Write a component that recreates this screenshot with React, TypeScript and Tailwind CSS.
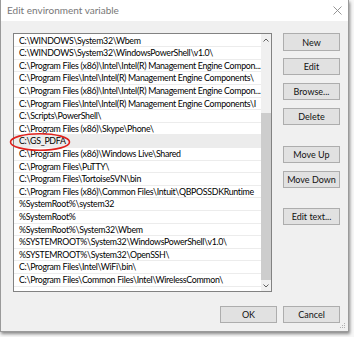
import React from 'react';

const rows = [
  'C:\\WINDOWS\\System32\\Wbem',
  'C:\\WINDOWS\\System32\\WindowsPowerShell\\v1.0\\',
  'C:\\Program Files (x86)\\Intel\\Intel(R) Management Engine Compon...',
  'C:\\Program Files\\Intel\\Intel(R) Management Engine Components\\',
  'C:\\Program Files (x86)\\Intel\\Intel(R) Management Engine Compon...',
  'C:\\Program Files\\Intel\\Intel(R) Management Engine Components\\I',
  'C:\\Scripts\\PowerShell\\',
  'C:\\Program Files (x86)\\Skype\\Phone\\',
  'C:\\GS_PDFA',
  'C:\\Program Files (x86)\\Windows Live\\Shared',
  'C:\\Program Files\\PuTTY\\',
  'C:\\Program Files\\TortoiseSVN\\bin',
  'C:\\Program Files (x86)\\Common Files\\Intuit\\QBPOSSDKRuntime',
  '%SystemRoot%\\system32',
  '%SystemRoot%',
  '%SystemRoot%\\System32\\Wbem',
  '%SYSTEMROOT%\\System32\\WindowsPowerShell\\v1.0\\',
  '%SYSTEMROOT%\\System32\\OpenSSH\\',
  'C:\\Program Files\\Intel\\WiFi\\bin\\',
  'C:\\Program Files\\Common Files\\Intel\\WirelessCommon\\',
];

function Btn({ label, className = '' }: { label: string; className?: string }) {
  return (
    <button
      className={`w-[57px] h-[17px] bg-[#e1e1e1] border border-[#adadad] text-[9px] text-[#111] leading-none flex items-center justify-center whitespace-nowrap ${className}`}
    >
      {label}
    </button>
  );
}

export default function App() {
  return (
    <div
      className="w-[354px] h-[337px] bg-[#f7f7f7] relative overflow-hidden"
      style={{ fontFamily: 'Lato, "Noto Sans", Arial, sans-serif' }}
    >
      <div className="w-[349px] h-[332px] flex flex-col border-l border-r border-b border-[#9a9a9a] shadow-[1px_2px_3px_rgba(0,0,0,0.45)] relative">
        {/* title bar */}
        <div className="h-[21px] bg-white flex items-center justify-between pl-[6px] pr-[5px]">
          <span className="text-[10px] text-[#777]">Edit environment variable</span>
          <svg width="9" height="9" viewBox="0 0 9 9" className="mr-[1px]">
            <path d="M0.5 0.5 L8.5 8.5 M8.5 0.5 L0.5 8.5" stroke="#8a8a8a" strokeWidth="0.9" />
          </svg>
        </div>

        {/* body */}
        <div className="flex-1 bg-[#f0f0f0] flex flex-col pl-[12px] pt-[12px] pr-[8px]">
          <div className="flex gap-[11px]">
            {/* list */}
            <div className="w-[259px] h-[259px] border border-[#828282] bg-white flex">
              <div className="flex-1 min-w-0 flex flex-col overflow-hidden pt-[0.7px]">
                {rows.map((r, i) => (
                  <div
                    key={i}
                    className={`h-[12.6px] shrink-0 pl-[5px] text-[8.8px] tracking-[-0.3px] leading-[12px] text-black whitespace-nowrap overflow-hidden border-b border-[#ececec] ${
                      i === 8 ? 'bg-[#ececec]' : ''
                    }`}
                  >
                    {r}
                  </div>
                ))}
              </div>
              {/* scrollbar */}
              <div className="w-[10px] shrink-0 bg-[#f0f0f0] flex flex-col">
                <div className="h-[12px] flex items-center justify-center">
                  <svg width="6" height="4" viewBox="0 0 6 4">
                    <path d="M0.5 3.5 L3 1 L5.5 3.5" stroke="#606060" strokeWidth="1" fill="none" />
                  </svg>
                </div>
                <div className="h-[67px]" />
                <div className="h-[167px] bg-[#cdcdcd]" />
                <div className="flex-1 flex items-center justify-center">
                  <svg width="6" height="4" viewBox="0 0 6 4">
                    <path d="M0.5 0.5 L3 3 L5.5 0.5" stroke="#606060" strokeWidth="1" fill="none" />
                  </svg>
                </div>
              </div>
            </div>

            {/* side buttons */}
            <div className="flex flex-col">
              <Btn label="New" className="h-[18px]" />
              <Btn label="Edit" className="mt-[7px]" />
              <Btn label="Browse..." className="mt-[8px]" />
              <Btn label="Delete" className="mt-[8px]" />
              <Btn label="Move Up" className="mt-[21px]" />
              <Btn label="Move Down" className="mt-[8px]" />
              <Btn label="Edit text..." className="mt-[20px]" />
            </div>
          </div>

          {/* bottom buttons */}
          <div className="flex justify-end gap-[6px] mt-[14px]">
            <Btn label="OK" />
            <Btn label="Cancel" />
          </div>
        </div>

        {/* resize grip */}
        <svg width="8" height="8" viewBox="0 0 8 8" className="absolute right-[2px] bottom-[2px]">
          <rect x="6" y="2" width="1" height="1" fill="#b0b0b0" />
          <rect x="4" y="4" width="1" height="1" fill="#b0b0b0" />
          <rect x="6" y="4" width="1" height="1" fill="#b0b0b0" />
          <rect x="2" y="6" width="1" height="1" fill="#b0b0b0" />
          <rect x="4" y="6" width="1" height="1" fill="#b0b0b0" />
          <rect x="6" y="6" width="1" height="1" fill="#b0b0b0" />
        </svg>
      </div>

      {/* red highlight ellipse */}
      <svg width="62" height="20" viewBox="0 0 62 20" className="absolute left-[9px] top-[132px]">
        <ellipse cx="31" cy="10" rx="29.5" ry="8.3" stroke="#e0201c" strokeWidth="1.6" fill="none" />
      </svg>
    </div>
  );
}
